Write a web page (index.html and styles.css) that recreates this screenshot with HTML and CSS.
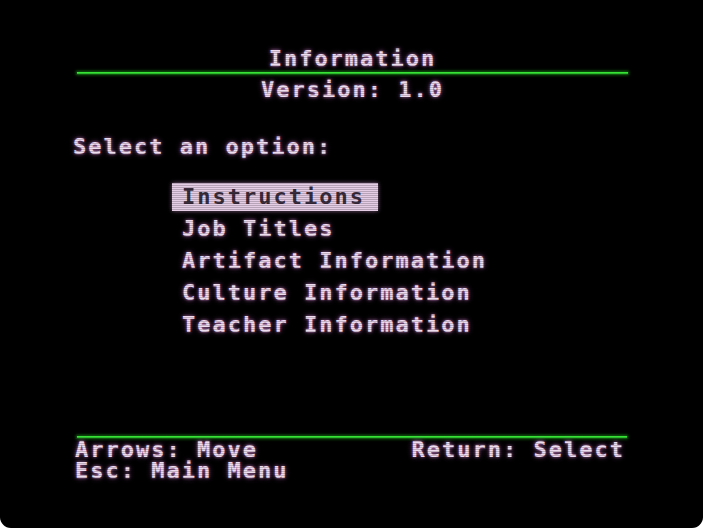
FILE: index.html
```html
<!DOCTYPE html>
<html>
<head>
<meta charset="utf-8">
<link rel="stylesheet" href="styles.css">
</head>
<body>
<div class="screen">
  <header class="head">
    <div class="title">Information</div>
    <div class="rule"></div>
    <div class="title">Version: 1.0</div>
  </header>
  <div class="prompt">Select an option:</div>
  <ul class="menu">
    <li class="item"><span class="label selected">Instructions</span></li>
    <li class="item"><span class="label">Job Titles</span></li>
    <li class="item"><span class="label">Artifact Information</span></li>
    <li class="item"><span class="label">Culture Information</span></li>
    <li class="item"><span class="label">Teacher Information</span></li>
  </ul>
  <footer class="foot">
    <div class="rule"></div>
    <div class="foot-row">
      <span>Arrows: Move</span>
      <span>Return: Select</span>
    </div>
    <div class="foot-row">
      <span>Esc: Main Menu</span>
    </div>
  </footer>
</div>
</body>
</html>
```

FILE: styles.css
```css
html, body {
  margin: 0;
  padding: 0;
  background: #ffffff;
}

.screen {
  position: relative;
  width: 703px;
  height: 528px;
  box-sizing: border-box;
  background: #000000;
  border-radius: 0 0 11px 11px;
  overflow: hidden;
  display: flex;
  flex-direction: column;
  padding: 48px 0 47px 0;
  font-family: "DejaVu Sans Mono", "Liberation Mono", monospace;
  font-weight: bold;
  font-size: 22px;
  letter-spacing: 2px;
  color: #f0dcf0;
  text-shadow: 0 0 3px rgba(230, 150, 230, 0.75), 0 0 6px rgba(200, 110, 200, 0.45);
}

.screen::after {
  content: "";
  position: absolute;
  inset: 0;
  pointer-events: none;
  background: repeating-linear-gradient(to bottom, rgba(0, 0, 0, 0) 0, rgba(0, 0, 0, 0) 1px, rgba(0, 0, 0, 0.2) 1px, rgba(0, 0, 0, 0.2) 2px);
}

.head {
  display: flex;
  flex-direction: column;
  align-items: center;
  margin: 0 75px 0 77px;
}

.title {
  line-height: 21px;
  height: 21px;
  white-space: pre;
}

.rule {
  align-self: stretch;
  height: 2px;
  background: #36e436;
  box-shadow: 0 0 3px 1px rgba(30, 180, 30, 0.7);
  margin: 3px 0 5px 0;
}

.prompt {
  margin: 36px 0 0 73px;
  line-height: 21px;
  height: 21px;
}

.menu {
  list-style: none;
  margin: 24px 0 0 172px;
  padding: 0;
}

.item {
  height: 32px;
  display: flex;
  align-items: center;
}

.label {
  display: inline-block;
  line-height: 28px;
  height: 28px;
  padding: 0 13px 0 10px;
  white-space: pre;
}

.label.selected {
  background: #e6cde6;
  color: #3a2e3e;
  text-shadow: none;
  box-shadow: 0 0 4px rgba(230, 170, 230, 0.6);
}

.foot {
  margin: auto 78px 0 75px;
  display: flex;
  flex-direction: column;
}

.foot .rule {
  margin: 0 -2px 1px 2px;
}

.foot-row {
  display: flex;
  justify-content: space-between;
  line-height: 21px;
  height: 21px;
  white-space: pre;
}
```
